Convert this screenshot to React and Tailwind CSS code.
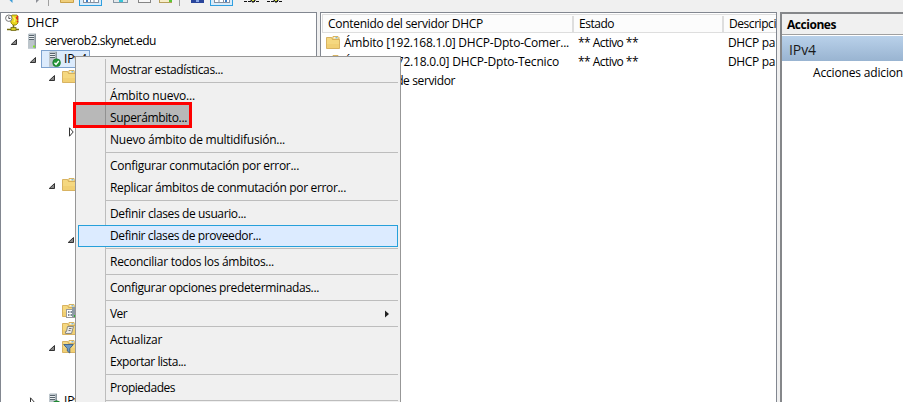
import React from "react";

const FONT = "font-['Open_Sans','Noto_Sans',sans-serif]";

function T({ w, children, className = "" }) {
  const ref = React.useRef(null);
  const [spacing, setSpacing] = React.useState(0);
  React.useLayoutEffect(() => {
    if (!w) return;
    const natural = ref.current.getBoundingClientRect().width;
    setSpacing((w - natural) / children.length);
  }, []);
  return (
    <span ref={ref} className={`inline-block shrink-0 whitespace-pre ${className}`} style={{ letterSpacing: spacing }}>
      {children}
    </span>
  );
}

function Arrow({ open }) {
  return (
    <svg width="8" height="10" viewBox="0 0 8 10" className="shrink-0">
      {open ? (
        <path d="M6.5 2.5V7.5H1.2Z" fill="#888" stroke="#333" />
      ) : (
        <path d="M1.5 .8V9.2L5.2 5Z" fill="#fff" stroke="#333" />
      )}
    </svg>
  );
}

function Folder({ kind }) {
  return (
    <svg width="16" height="16" viewBox="0 0 16 16" className="shrink-0">
      <path d="M7 4V2.5L8 1.5H13L14 2.5V5H7Z" fill="#f5dc92" stroke="#cfa548" strokeWidth=".8" />
      <rect x="9" y="2.3" width="3.6" height="1" fill="#fff" />
      <rect x="10.5" y="2.3" width="2" height="1" fill="#4da3dc" />
      <path d="M1.5 2.5H6.5L7.5 4.5H14.5V13.5H1.5Z" fill="#f5d880" stroke="#d4ad57" strokeWidth=".9" />
      <path d="M2 9H14V13H2Z" fill="#efcb6c" opacity=".6" />
      {kind === "options" && (
        <g>
          <rect x="5.5" y="6.5" width="8" height="8" fill="#fff" stroke="#9b9b9b" />
          <path d="M7 9H12M7 12H12" stroke="#567" strokeWidth="1.5" strokeDasharray="1.5 1" />
          <rect x="11" y="4" width="4" height="10" fill="#8d9ba5" />
          <rect x="13" y="12" width="2" height="2" fill="#2fb52f" />
        </g>
      )}
      {kind === "policy" && (
        <g>
          <path d="M6.5 5.5H12.5L10.5 12.5H4.5V10.5H5.5Z" fill="#e8e8e8" stroke="#8b8b80" />
          <path d="M8 7.5H10.5M7.5 9.5H9.5" stroke="#777" />
        </g>
      )}
      {kind === "filter" && <path d="M2.7 5.5H12.3L8.8 9.5V14L6.3 12V9.5Z" fill="#6f9ac4" stroke="#3d5f80" strokeWidth=".9" />}
    </svg>
  );
}

function Server({ check }) {
  return (
    <svg width="16" height="16" viewBox="0 0 16 16" className="shrink-0">
      <path d="M4 1.5L5 .5H12V14.5L11 15.5H4Z" fill="#aab5bd" />
      <rect x="4" y="1" width="7" height="14.5" fill="#bcc5cb" />
      <path d="M11.3 1V15.5" stroke="#8d989f" strokeWidth="1.4" />
      <path d="M5 2.5H10M5 4.5H10M5 6.5H10" stroke="#58646d" />
      <path d="M5 3.5H10M5 5.5H10" stroke="#e9edef" />
      {check ? (
        <g>
          <circle cx="11.6" cy="11.7" r="3.9" fill="#239535" stroke="#14732a" strokeWidth=".6" />
          <path d="M9.5 11.8L11 13.4L13.8 10" fill="none" stroke="#fff" strokeWidth="1.4" />
        </g>
      ) : (
        <rect x="9" y="12.5" width="2" height="2" fill="#7ee32b" />
      )}
    </svg>
  );
}

function DhcpIcon() {
  return (
    <svg width="16" height="18" viewBox="0 0 16 18" className="shrink-0">
      <path d="M5 3L7 1H12L13 3V9L11 11H8L6 9Z" fill="#e8d51c" stroke="#8a7a08" strokeWidth=".8" />
      <path d="M13 2L11.5 4L13 5.5M12 7L13 8" stroke="#d22" strokeWidth="1.3" fill="none" />
      <path d="M8 3L10 5L9 8" stroke="#fff36a" strokeWidth="1.4" fill="none" />
      <path d="M8.5 11V14M2 15.5H14" stroke="#77700f" strokeWidth="1.6" />
      <rect x="6" y="13.5" width="5" height="3" fill="#d8cd22" stroke="#666010" strokeWidth=".7" />
      <circle cx="3.8" cy="4.2" r="3.2" fill="#fff" stroke="#777" />
      <path d="M3.8 2.3V4.5H5.5" stroke="#444" fill="none" strokeWidth=".9" />
    </svg>
  );
}

const BLANK = {};
const TREE = [
  { pad: "pl-[4px]", icon: "dhcp", text: "DHCP", w: 32 },
  { pad: "pl-[9px]", open: true, icon: "server", text: "serverob2.skynet.edu", w: 111 },
  { pad: "pl-[28px]", open: true, icon: "check", text: "IPv4", w: 23, selected: true },
  { pad: "pl-[47px]", open: true, icon: "folder" },
  BLANK,
  BLANK,
  { pad: "pl-[67px]", open: false },
  BLANK,
  BLANK,
  { pad: "pl-[47px]", open: true, icon: "folder" },
  BLANK,
  BLANK,
  { pad: "pl-[66px]", open: true },
  BLANK,
  BLANK,
  BLANK,
  { pad: "pl-[60px]", icon: "options" },
  { pad: "pl-[60px]", icon: "policy" },
  { pad: "pl-[47px]", open: true, icon: "filter" },
  BLANK,
  BLANK,
  { pad: "pl-[28px]", open: false, icon: "check", text: "IPv6", w: 23 },
];

function TreeIcon({ icon }) {
  if (icon === "dhcp") return <DhcpIcon />;
  if (icon === "server") return <Server />;
  if (icon === "check") return <Server check />;
  return <Folder kind={icon} />;
}

const ICON_BOX = {
  dhcp: "w-[22px]",
  server: "ml-px w-[21px]",
  check: "ml-[3px] w-[19px]",
};

function TreeRow({ node }) {
  return (
    <div className={`flex h-[18px] shrink-0 items-center ${node.pad || ""}`}>
      {node.open !== undefined && (
        <span className="mt-[2px] flex w-[13px] shrink-0">
          <Arrow open={node.open} />
        </span>
      )}
      {node.icon && (
        <span className={`flex h-[18px] shrink-0 items-center ${node.selected ? "-ml-px w-[49px] border border-[#7da2ce] bg-[#dcebfc]" : ""}`}>
          <span className={ICON_BOX[node.icon] || "w-[21px]"}>
            <TreeIcon icon={node.icon} />
          </span>
          {node.text && <T w={node.w}>{node.text}</T>}
        </span>
      )}
    </div>
  );
}

const MENU = [
  ["Mostrar estadísticas...", 113],
  null,
  ["Ámbito nuevo...", 85],
  ["Superámbito...", 77],
  ["Nuevo ámbito de multidifusión...", 175],
  null,
  ["Configurar conmutación por error...", 189],
  ["Replicar ámbitos de conmutación por error...", 236],
  null,
  ["Definir clases de usuario...", 136],
  ["Definir clases de proveedor...", 151, "hot"],
  null,
  ["Reconciliar todos los ámbitos...", 164],
  null,
  ["Configurar opciones predeterminadas...", 209],
  null,
  ["Ver", 17, "sub"],
  null,
  ["Actualizar", 52],
  ["Exportar lista...", 76],
  null,
  ["Propiedades", 65],
  null,
];

function ContextMenu() {
  return (
    <div className="absolute left-[75px] top-[56px] h-[360px] w-[326px] border border-[#979797] bg-[#f0f0f0] px-[2px] pt-[2px]">
      <div className="absolute left-[29px] top-[2px] h-[350px] w-px bg-[#bdbdbd]" />
      {MENU.map((item, i) =>
        item === null ? (
          <div key={i} className="h-1 pl-[28px] pt-px">
            <div className="h-px bg-[#bdbdbd]" />
          </div>
        ) : (
          <div
            key={i}
            className={`relative flex h-[22px] items-center justify-between border pl-[31px] pr-[8px] ${
              item[2] === "hot" ? "border-[#26a0da] bg-[#dcebff]" : "border-transparent"
            }`}
          >
            <T w={item[1]}>{item[0]}</T>
            {item[2] === "sub" && (
              <svg width="4" height="8" viewBox="0 0 4 8">
                <path d="M0 .5L4 4L0 7.5Z" fill="#222" />
              </svg>
            )}
          </div>
        )
      )}
    </div>
  );
}

function Toolbar() {
  return (
    <div className="h-3 shrink-0 overflow-hidden bg-[#f0f0f0]">
      <svg width="903" height="12" viewBox="0 0 903 12">
        <path d="M8.5 -1L12.5 3V-1Z" fill="#3b9bd6" />
        <path d="M36 -1V3L40 -1Z" fill="#8c8f96" />
        <path d="M48.5 0V6M179.5 0V6" stroke="#a0a0a0" />
        <path d="M60.5 -1H73.5V2.5H60.5Z" fill="#efce7b" stroke="#c9a149" />
        <rect x="79.5" y="-5" width="22" height="10.5" fill="#d9ebf9" stroke="#2f9fe0" />
        <rect x="83.5" y="-2" width="15" height="4.5" fill="#fff" stroke="#8690a0" />
        <path d="M90.5 0V2M94 0V2" stroke="#8690a0" />
        <rect x="86" y="0" width="2" height="2" fill="#3b7fc9" />
        <rect x="113.5" y="-2" width="14" height="4.5" fill="#e4e8eb" stroke="#8796a3" />
        <rect x="119" y="0" width="4" height="2" fill="#35c5d8" />
        <rect x="138.5" y="-2" width="12" height="4.5" fill="#f7f7f7" stroke="#858585" />
        <rect x="159.5" y="-2" width="12" height="4.5" fill="#f7edc9" stroke="#b79f5c" />
        <rect x="169" y="0" width="3" height="2" fill="#5bc536" />
        <rect x="191" y="-2" width="13" height="5" fill="#29459b" />
        <rect x="196" y="0" width="3" height="2" fill="#89a7e6" />
        <rect x="210.5" y="-5" width="22" height="10.5" fill="#d9ebf9" stroke="#2f9fe0" />
        <rect x="214.5" y="-2" width="15" height="4.5" fill="#fff" stroke="#8690a0" />
        <path d="M223.5 0V2M219 0V2" stroke="#8690a0" />
        <rect x="225" y="0" width="2" height="2" fill="#3b7fc9" />
        <path d="M244 1.5H260M267 1.5H283" stroke="#111" strokeDasharray="3 1" />
        <path d="M250 0H256L253 3ZM273 0H279L276 3Z" fill="#222" />
        <path d="M252 .5H254M275 .5H277" stroke="#d5e23c" />
      </svg>
    </div>
  );
}

function HeaderCell({ width, w, children }) {
  return (
    <div className={`flex h-full shrink-0 items-center border-r-2 border-[#dedede] pl-[5px] ${width}`}>
      <T w={w}>{children}</T>
    </div>
  );
}

function ListRow({ name, w, active }) {
  return (
    <div className="flex h-[19px] items-center pl-[4px]">
      <span className="w-[19px] shrink-0">
        <Folder />
      </span>
      <span className="flex w-[234px] shrink-0">
        <T w={w}>{name}</T>
      </span>
      {active && (
        <>
          <span className="flex w-[150px] shrink-0">
            <T w={60}>** Activo **</T>
          </span>
          <T w={47}>DHCP pa</T>
        </>
      )}
    </div>
  );
}

export default function App() {
  return (
    <div className={`relative flex h-[402px] w-[903px] flex-col overflow-hidden bg-[#f0f0f0] text-[12px] leading-[16px] text-black ${FONT}`}>
      <Toolbar />
      <div className="flex min-h-0 flex-1">
        <div className="flex w-[317px] shrink-0 flex-col overflow-hidden border-x border-t border-[#828790] bg-white pt-px">
          {TREE.map((node, i) => (
            <TreeRow key={i} node={node} />
          ))}
        </div>
        <div className="ml-[3px] w-[457px] shrink-0 overflow-hidden border-x border-t border-[#828790] bg-white">
          <div className="ml-px mt-px flex h-[19px] overflow-hidden border border-r-0 border-[#dedede] bg-[#fcfcfc] pt-px">
            <HeaderCell width="w-[251px]" w={155}>Contenido del servidor DHCP</HeaderCell>
            <HeaderCell width="w-[150px]" w={35}>Estado</HeaderCell>
            <HeaderCell width="w-[150px]" w={47}>Descripci</HeaderCell>
          </div>
          <ListRow name="Ámbito [192.168.1.0] DHCP-Dpto-Comer..." w={225} active />
          <ListRow name="Ámbito [172.18.0.0] DHCP-Dpto-Tecnico" w={215} active />
          <ListRow name="Opciones de servidor" w={111} />
        </div>
        <div className="ml-[3px] flex w-[123px] shrink-0 flex-col overflow-hidden border-l-2 border-t-2 border-[#85878a] bg-white">
          <div className="flex h-[21px] shrink-0 items-center border-b border-[#a0a0a0] bg-[#f0f0f0] pl-[5px] pt-px font-bold">
            <T w={49}>Acciones</T>
          </div>
          <div className="mt-px flex h-[25px] shrink-0 items-center bg-linear-to-b from-[#b9d1ea] to-[#99b4d1] pl-[7px] pt-[2px] text-[14px] text-[#1a1a1a]">
            <T w={27}>IPv4</T>
          </div>
          <div className="flex h-6 shrink-0 items-center pl-[31px]">
            <T w={90}>Acciones adicion</T>
          </div>
        </div>
      </div>
      <ContextMenu />
      <div className="absolute left-[73px] top-[102px] h-[26px] w-[119px] border-[3px] border-[#fe0000] bg-black/23" />
    </div>
  );
}
